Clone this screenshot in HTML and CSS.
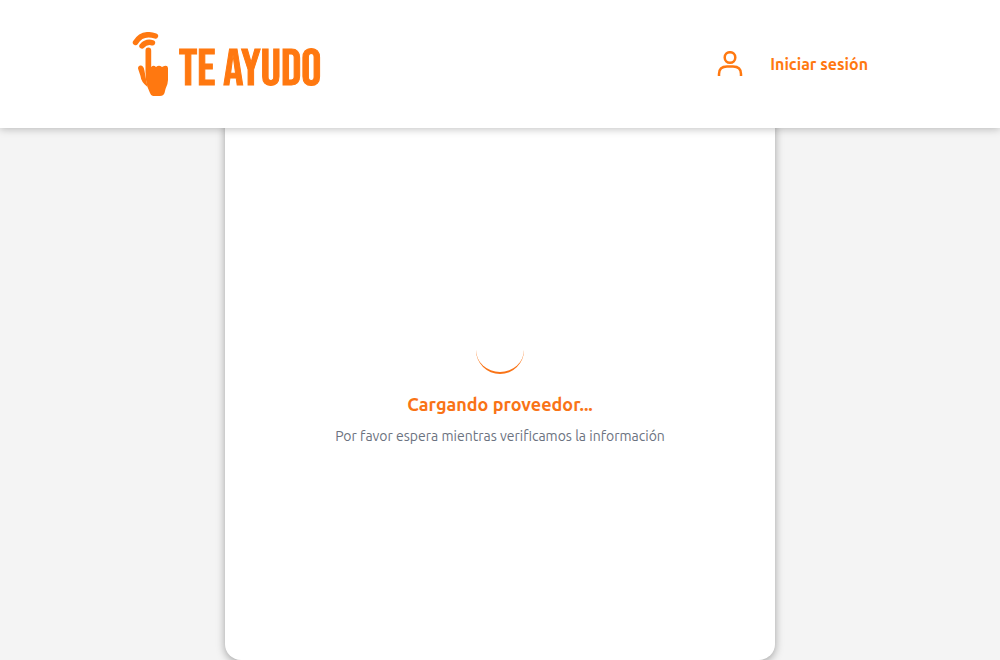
FILE: index.html
```html
<!DOCTYPE html>
<html lang="es">
<head>
<meta charset="utf-8">
<meta name="viewport" content="width=device-width, initial-scale=1">
<title>Te Ayudo</title>
<link rel="stylesheet" href="styles.css">
</head>
<body>
<header class="header">
  <div class="header-inner">
    <a class="brand" href="#">
      <svg class="brand-icon" viewBox="0 0 37 64" aria-hidden="true">
        <g fill="none" stroke="currentColor" stroke-width="5.4" stroke-linecap="round">
          <path d="M3.500 10.500C8 3 14.500 1 23.500 4"/>
          <path d="M10 14C13 10.500 16 9.500 20.500 10.800"/>
        </g>
        <path fill="currentColor" d="M13.500 18.500Q13.500 15.500 16.300 15.500Q19.200 15.500 19.200 18.500V35Q21.500 32.500 24 35Q27 32.500 30 35Q35.500 32 36 36V48Q36 52 33.500 57L32.500 61Q31.500 64 28 64H21Q19 64 18 61L15.500 55Q13.500 48 13.500 40Z"/>
        <path fill="currentColor" d="M6.500 38Q5 34.500 8 33.500Q11.500 33 12.300 38L15.500 55Q9 50 8.500 44Z"/>
      </svg>
      <span class="brand-name">TE AYUDO</span>
    </a>
    <a class="login" href="#">
      <svg class="login-icon" viewBox="0 0 26 26" fill="none" stroke="currentColor" stroke-width="2.500" aria-hidden="true">
        <circle cx="13" cy="6.500" r="5.300"/>
        <path d="M2 25V23Q2 15.500 10 15.500H16Q24 15.500 24 23V25"/>
      </svg>
      <span>Iniciar sesión</span>
    </a>
  </div>
</header>
<main class="main">
  <section class="card" role="status">
    <div class="spinner"></div>
    <h1 class="title">Cargando proveedor...</h1>
    <p class="message">Por favor espera mientras verificamos la información</p>
  </section>
</main>
</body>
</html>
```
FILE: styles.css
```css
* { box-sizing: border-box; }
body {
  margin: 0;
  min-height: 100vh;
  display: flex;
  flex-direction: column;
  background: #f4f4f4;
  font-family: Ubuntu, "Noto Sans", sans-serif;
}
.header {
  position: sticky;
  top: 0;
  z-index: 1;
  padding: 32px;
  background: #fff;
  box-shadow: 0 1px 8px rgba(0, 0, 0, 0.25);
}
.header-inner {
  max-width: 736px;
  margin: 0 auto;
  display: flex;
  align-items: center;
  justify-content: space-between;
}
.brand, .login {
  display: flex;
  align-items: center;
  color: #ff7810;
  text-decoration: none;
}
.brand { gap: 10px; height: 64px; }
.brand-icon { width: 37px; height: 64px; }
.brand-name {
  font-family: "Bebas Neue", "Liberation Sans Narrow", "Liberation Sans", sans-serif;
  font-size: 50px;
  font-weight: 400;
  line-height: 50px;
  padding-top: 12px;
  white-space: nowrap;
  -webkit-text-stroke: 1px currentColor;
}
.login {
  gap: 27px;
  font-size: 16px;
  font-weight: 600;
  line-height: 24px;
}
.login-icon { width: 26px; height: 26px; }
.main {
  flex: 1;
  display: flex;
  justify-content: center;
  margin-top: -16px;
}
.card {
  width: 100%;
  max-width: 550px;
  display: flex;
  flex-direction: column;
  align-items: center;
  justify-content: center;
  background: #fff;
  border-radius: 16px;
  box-shadow: 0 2px 8px rgba(0, 0, 0, 0.35);
  text-align: center;
}
.spinner {
  width: 48px;
  height: 48px;
  border-bottom: 2px solid #f97316;
  border-radius: 50%;
}
.title {
  margin: 16px 0 8px;
  color: #f97316;
  font-size: 18px;
  font-weight: 600;
  line-height: 28px;
}
.message {
  margin: 0;
  color: #6b7280;
  font-size: 14px;
  line-height: 20px;
}
```
